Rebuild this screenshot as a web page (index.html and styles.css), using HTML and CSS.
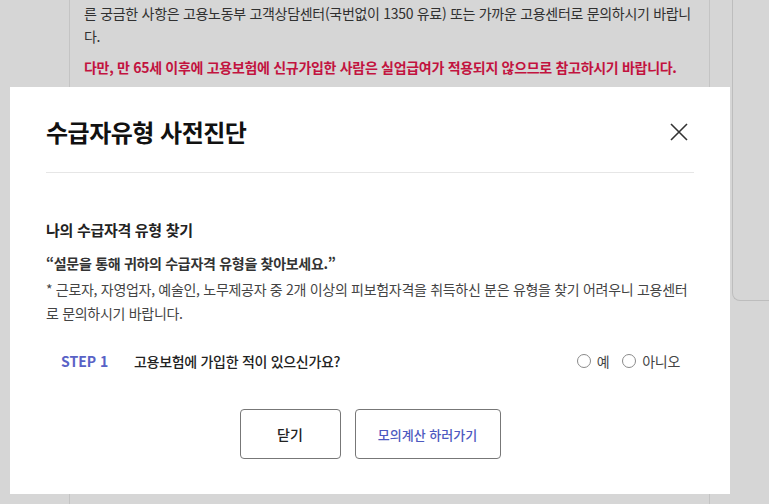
FILE: index.html
```html
<!DOCTYPE html>
<html lang="ko">
<head>
    <meta charset="UTF-8">
    <meta name="viewport" content="width=device-width, initial-scale=1.0">
    <title>수급자유형 사전진단</title>
    <link rel="stylesheet" href="styles.css">
</head>
<body>
    <div class="page">
        <div class="content">
            <p>른 궁금한 사항은 고용노동부 고객상담센터(국번없이 1350 유료) 또는 가까운 고용센터로 문의하시기 바랍니다.</p>
            <p class="warn">다만, 만 65세 이후에 고용보험에 신규가입한 사람은 실업급여가 적용되지 않으므로 참고하시기 바랍니다.</p>
        </div>
        <div class="side"></div>
    </div>

    <div class="modal">
        <div class="modal-head">
            <h2>수급자유형 사전진단</h2>
            <button class="close" type="button" aria-label="닫기">
                <svg width="20" height="20" viewBox="0 0 20 20">
                    <path d="M2 2 L18 18 M18 2 L2 18" stroke="#333" stroke-width="1.6" fill="none"/>
                </svg>
            </button>
        </div>
        <div class="modal-body">
            <h3>나의 수급자격 유형 찾기</h3>
            <p class="quote">“설문을 통해 귀하의 수급자격 유형을 찾아보세요.”</p>
            <p class="note">* 근로자, 자영업자, 예술인, 노무제공자 중 2개 이상의 피보험자격을 취득하신 분은 유형을 찾기 어려우니 고용센터로 문의하시기 바랍니다.</p>

            <div class="step">
                <span class="step-no">STEP 1</span>
                <span class="question">고용보험에 가입한 적이 있으신가요?</span>
                <div class="options">
                    <label><span class="radio"></span>예</label>
                    <label><span class="radio"></span>아니오</label>
                </div>
            </div>

            <div class="buttons">
                <button class="btn" type="button">닫기</button>
                <button class="btn btn-go" type="button">모의계산 하러가기</button>
            </div>
        </div>
    </div>
</body>
</html>
```

FILE: styles.css
```css
body {
    margin: 0;
    background: #d6d6d6;
    font-family: "Noto Sans CJK KR", "Noto Sans", sans-serif;
    font-size: 14px;
    letter-spacing: -0.3px;
    color: #333;
    overflow: hidden;
}
.page {
    display: flex;
    height: 504px;
}
.content {
    margin-left: 69px;
    width: 612px;
    padding: 2px 13px 0 14px;
    border-left: 1px solid #c4c4c4;
    border-right: 1px solid #c4c4c4;
}
.content p {
    margin: 0 0 8px;
    line-height: 23px;
    color: #303030;
}
.content .warn {
    color: #c2133f;
    font-weight: 700;
}
.side {
    margin-left: 22px;
    flex: 1;
    height: 300px;
    border-left: 1px solid #bdbdbd;
    border-bottom: 1px solid #bdbdbd;
    border-bottom-left-radius: 8px;
}

/* modal */
.modal {
    position: fixed;
    top: 87px;
    left: 10px;
    width: 648px;
    height: 407px;
    padding: 0 36px;
    background: #fff;
}
.modal-head {
    display: flex;
    align-items: center;
    justify-content: space-between;
    padding: 29px 0 24px;
    border-bottom: 1px solid #e6e6e6;
}
.modal-head h2 {
    margin: 0;
    font-size: 24px;
    line-height: 32px;
    font-weight: 700;
    letter-spacing: -0.5px;
    color: #111;
}
.close {
    border: 0;
    background: none;
    padding: 0;
    margin-right: 5px;
    width: 20px;
    height: 20px;
}
.modal-body {
    padding-top: 46px;
}
.modal-body h3 {
    margin: 0 0 10px;
    font-size: 15px;
    line-height: 22px;
    font-weight: 700;
    color: #222;
}
.quote {
    margin: 0;
    line-height: 24px;
    font-weight: 700;
    color: #333;
}
.note {
    margin: 2px 0 0;
    line-height: 24px;
    color: #444;
}
.step {
    display: flex;
    align-items: center;
    margin-top: 24px;
    padding: 0 14px 0 15px;
    line-height: 24px;
}
.step-no {
    width: 73px;
    font-size: 14px;
    font-weight: 700;
    letter-spacing: 0;
    color: #5862c6;
}
.question {
    flex: 1;
    font-weight: 500;
    color: #222;
}
.options {
    display: flex;
    gap: 13px;
    color: #444;
}
.options label {
    display: flex;
    align-items: center;
    gap: 6px;
}
.radio {
    width: 12px;
    height: 12px;
    border: 1px solid #8a8a8a;
    border-radius: 50%;
}
.buttons {
    display: flex;
    justify-content: center;
    gap: 14px;
    margin-top: 36px;
}
.btn {
    width: 101px;
    height: 50px;
    border: 1px solid #777;
    border-radius: 4px;
    background: #fff;
    font-family: inherit;
    font-size: 14px;
    font-weight: 500;
    color: #222;
}
.btn-go {
    width: 146px;
    font-size: 13px;
    color: #4d59c0;
}
```
